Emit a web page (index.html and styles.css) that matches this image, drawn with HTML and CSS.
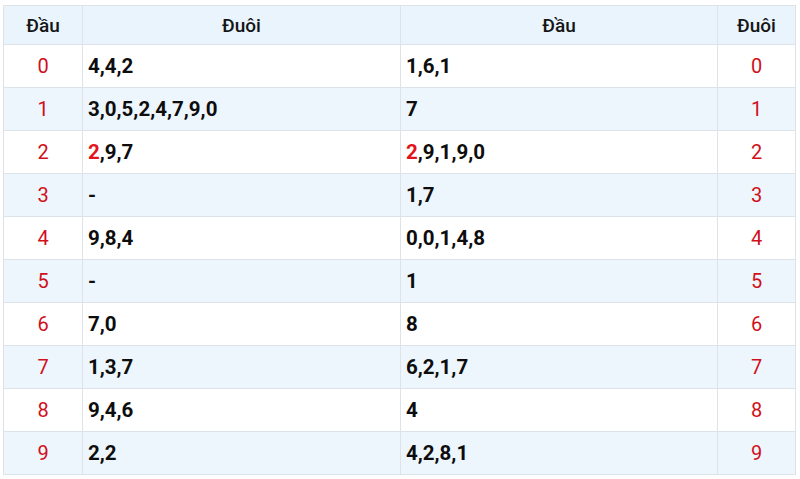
FILE: index.html
```html
<!DOCTYPE html>
<html lang="vi">
<head>
<meta charset="utf-8">
<link rel="stylesheet" href="styles.css">
</head>
<body>
<div class="wrap">
<table class="lt">
<thead>
<tr><th class="c1">Đầu</th><th class="c2">Đuôi</th><th class="c3">Đầu</th><th class="c4">Đuôi</th></tr>
</thead>
<tbody>
<tr><td class="n">0</td><td class="v">4,4,2</td><td class="v">1,6,1</td><td class="n">0</td></tr>
<tr><td class="n">1</td><td class="v">3,0,5,2,4,7,9,0</td><td class="v">7</td><td class="n">1</td></tr>
<tr><td class="n">2</td><td class="v"><span class="hl">2</span>,9,7</td><td class="v"><span class="hl">2</span>,9,1,9,0</td><td class="n">2</td></tr>
<tr><td class="n">3</td><td class="v">-</td><td class="v">1,7</td><td class="n">3</td></tr>
<tr><td class="n">4</td><td class="v">9,8,4</td><td class="v">0,0,1,4,8</td><td class="n">4</td></tr>
<tr><td class="n">5</td><td class="v">-</td><td class="v">1</td><td class="n">5</td></tr>
<tr><td class="n">6</td><td class="v">7,0</td><td class="v">8</td><td class="n">6</td></tr>
<tr><td class="n">7</td><td class="v">1,3,7</td><td class="v">6,2,1,7</td><td class="n">7</td></tr>
<tr><td class="n">8</td><td class="v">9,4,6</td><td class="v">4</td><td class="n">8</td></tr>
<tr><td class="n">9</td><td class="v">2,2</td><td class="v">4,2,8,1</td><td class="n">9</td></tr>
</tbody>
</table>
</div>
</body>
</html>
```
FILE: styles.css
```css
html, body {
  margin: 0;
  padding: 0;
  background: #ffffff;
}
body {
  font-family: Roboto, "Noto Sans", Arial, sans-serif;
  color: #111;
}
.wrap {
  padding: 5px 5px 0 3px;
}
.lt {
  width: 792px;
  border-collapse: collapse;
  table-layout: fixed;
}
.lt th, .lt td {
  border: 1px solid #dde3e8;
  padding: 0 5px;
}
.lt th {
  height: 38px;
  background: #eaf4fd;
  font-weight: 500;
  font-size: 19px;
  color: #151515;
  text-align: center;
}
.c1 { width: 68px; }
.c2 { width: 307px; }
.c3 { width: 306px; }
.c4 { width: 67px; }
.lt td {
  height: 42px;
}
.lt tbody tr:nth-child(odd) td { background: #ffffff; }
.lt tbody tr:nth-child(even) td { background: #eef6fd; }
.n {
  text-align: center;
  color: #d0101a;
  font-size: 20px;
  font-weight: 400;
}
.v {
  text-align: left;
  font-size: 20.5px;
  font-weight: 700;
  color: #0d0d0d;
}
.hl { color: #e3131b; }
```
